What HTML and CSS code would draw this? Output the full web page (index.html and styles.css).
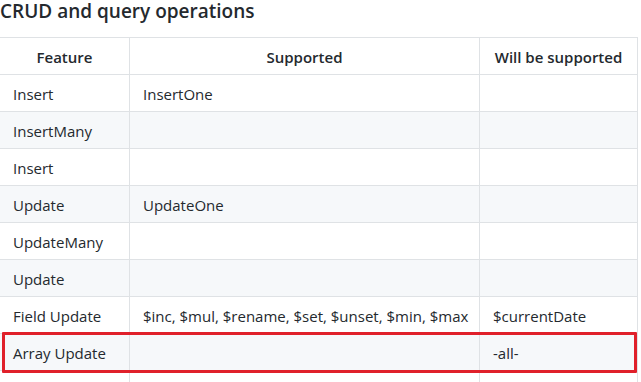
FILE: index.html
```html
<!DOCTYPE html>
<html>
<head>
<meta charset="utf-8">
<link rel="stylesheet" href="styles.css">
</head>
<body>
<h3 class="title">CRUD and query operations</h3>
<div class="table-wrap">
<table class="ops">
<colgroup><col class="c1"><col class="c2"><col class="c3"></colgroup>
<thead>
<tr><th>Feature</th><th>Supported</th><th>Will be supported</th></tr>
</thead>
<tbody>
<tr><td>Insert</td><td>InsertOne</td><td></td></tr>
<tr><td>InsertMany</td><td></td><td></td></tr>
<tr><td>Insert</td><td></td><td></td></tr>
<tr><td>Update</td><td>UpdateOne</td><td></td></tr>
<tr><td>UpdateMany</td><td></td><td></td></tr>
<tr><td>Update</td><td></td><td></td></tr>
<tr><td>Field Update</td><td>$inc, $mul, $rename, $set, $unset, $min, $max</td><td>$currentDate</td></tr>
<tr><td>Array Update</td><td></td><td>-all-</td></tr>
<tr><td>&nbsp;</td><td></td><td></td></tr>
</tbody>
</table>
<div class="highlight"></div>
</div>
</body>
</html>
```
FILE: styles.css
```css
html, body {
  margin: 0;
  padding: 0;
  background: #fff;
  overflow: hidden;
}
body {
  font-family: "Open Sans", "Noto Sans", sans-serif;
  color: #24292e;
  font-size: 15px;
}
.title {
  font-size: 19px;
  font-weight: 600;
  line-height: 22px;
  margin: 0 0 15px 0;
  padding: 0;
}
.table-wrap {
  position: relative;
  margin-left: -1px;
}
.ops {
  border-collapse: collapse;
  table-layout: fixed;
  width: 638px;
}
.c1 { width: 130px; }
.c2 { width: 350px; }
.c3 { width: 158px; }
.ops th, .ops td {
  border: 1px solid #dfe2e5;
  padding: 7px 13px 5px;
  line-height: 24px;
  text-align: left;
  white-space: nowrap;
  overflow: hidden;
}
.ops th {
  font-weight: 600;
  text-align: center;
}
.ops tbody tr:nth-child(even) {
  background: #f6f8fa;
}
.highlight {
  position: absolute;
  left: 3px;
  top: 295px;
  width: 629px;
  height: 35px;
  border: 3px solid #e0202a;
  border-radius: 1px;
}
```
